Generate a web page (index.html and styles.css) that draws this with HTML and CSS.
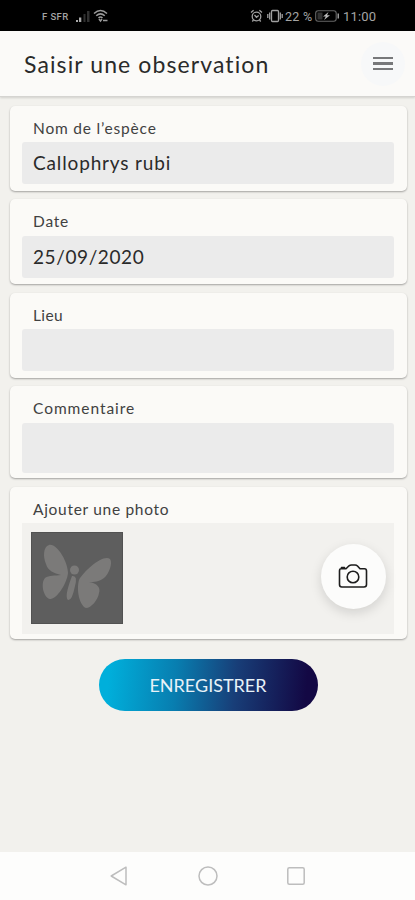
FILE: index.html
```html
<!DOCTYPE html>
<html lang="fr">
<head>
<meta charset="utf-8">
<title>Saisir une observation</title>
<link rel="stylesheet" href="styles.css">
</head>
<body>
<div class="status">
  <span class="carrier">F SFR</span>
  <svg class="signal" width="15" height="13" viewBox="0 0 15 13"><path d="M0 12V10H2V12ZM3 12V7.500H5.300V12Z" fill="#aaa"/><path d="M7.500 12V4H9.500V12ZM11 12V1H13.500V12Z" fill="#303030"/></svg>
  <svg class="wifi" width="16" height="14" viewBox="0 0 16 14" fill="none" stroke="#9a9a9a" stroke-width="1.500"><path d="M1 4.500Q7.500-1.500 14 4.500M3.200 6.800Q7.500 3 11.800 6.800M5.500 9Q7.500 7 9.500 9"/><path d="M6 10L7.500 12L9 10M10 11.500H14.500" /></svg>
  <span class="space"></span>
  <svg class="alarm" width="13" height="14" viewBox="0 0 13 14" fill="none" stroke="#a0a0a0" stroke-width="1.300"><circle cx="6.500" cy="7.500" r="4.300"/><path d="M1 3.500L3.600 1.300M12 3.500L9.400 1.300M4.500 6L6.500 8.300L8.700 6.500M3.500 11L2.300 12.500M9.500 11L10.700 12.500"/></svg>
  <svg class="vibrate" width="16" height="14" viewBox="0 0 16 14" fill="none" stroke="#a0a0a0" stroke-width="1.300"><rect x="4.500" y="1.500" width="7" height="11" rx="1"/><path d="M2.700 3.500V10.500M.8 5V9M13.300 3.500V10.500M15.200 5V9"/></svg>
  <span class="percent">22 %</span>
  <svg class="battery" width="25" height="12" viewBox="0 0 25 12"><rect x=".7" y=".7" width="20.500" height="10.600" rx="2.500" fill="none" stroke="#666" stroke-width="1.100"/><path d="M22.500 3.500H24V8.500H22.500Z" fill="#999"/><rect x="2.500" y="2.500" width="5" height="7" fill="#333"/><path d="M13.500 2L8 6.500H10.800L9 10L15 5.300H12Z" fill="#bbb"/></svg>
  <span class="clock">11:00</span>
</div>
<header class="header">
  <h1 class="title">Saisir une observation</h1>
  <button class="menu" aria-label="Menu"><i></i><i></i><i></i></button>
</header>
<main class="form">
  <section class="card"><div class="label l-name">Nom de l’espèce</div><div class="field v-name">Callophrys rubi</div></section>
  <section class="card"><div class="label l-date">Date</div><div class="field v-date">25/09/2020</div></section>
  <section class="card"><div class="label l-place">Lieu</div><div class="field"></div></section>
  <section class="card comment"><div class="label l-comment">Commentaire</div><div class="field"></div></section>
  <section class="card photo"><div class="label l-photo">Ajouter une photo</div>
    <div class="picker">
      <svg class="thumb" width="92" height="92" viewBox="0 0 92 92"><rect width="92" height="92" fill="#5e5e5e"/><rect x=".5" y=".5" width="91" height="91" fill="none" stroke="#525252"/><g fill="#7b7a79"><path d="M18 13C26 11 37 30 37 41C36 52 25 68 19 67C13 66 9 52 14 46C18 43 24 44 30 43C23 41 17 39 15 32C12 25 12 15 18 13Z"/><path d="M79 27C82 31 78 42 73 46C68 50 63 50 58 50C66 51 70 56 68 61C67 68 60 76 55 76C49 74 45 59 48 48C53 39 72 22 79 27Z"/><circle cx="43.500" cy="38" r="4.500"/><path d="M41 44Q47 43 44 54Q41 69 37 68Q33 65 41 44Z"/></g></svg>
      <button class="camera" aria-label="Photo"><svg width="30" height="25" viewBox="0 0 30 25" fill="none" stroke="#1d1d1d" stroke-width="1.600" stroke-linejoin="round" stroke-linecap="round"><path d="M3 4.800H8L11 1.800Q12 1 13.500 1H17Q18.500 1 19.500 2L22 4.800H26.500Q28.500 4.800 28.500 7V20.500Q28.500 23 26 23H3.800Q1.500 23 1.500 20.500V7Q1.500 4.800 3 4.800ZM3.500 4.500V3.500H6.500V4.500"/><circle cx="15" cy="13" r="5.800"/></svg></button>
    </div>
  </section>
  <button class="save"><span>ENREGISTRER</span></button>
</main>
<nav class="nav">
  <svg width="18" height="20" viewBox="0 0 18 20"><path d="M16 1.200V18.800L1.200 10Z"/></svg>
  <svg width="20" height="20" viewBox="0 0 20 20"><circle cx="10" cy="10" r="9"/></svg>
  <svg width="18" height="18" viewBox="0 0 18 18"><rect x=".8" y=".8" width="16.400" height="16.400" rx="1.500"/></svg>
</nav>
</body>
</html>
```
FILE: styles.css
```css
* { box-sizing: border-box; }
body { margin: 0; width: 415px; height: 900px; overflow: hidden; display: flex; flex-direction: column; background: #f2f1ed; font-family: Lato, sans-serif; color: #2a2a2a; }
button { border: 0; padding: 0; font: inherit; }
svg { flex: none; display: block; }
.status { height: 31px; flex: none; background: #000; display: flex; align-items: center; padding: 1px 38px 0 42px; color: #a5a5a5; font: 12px Roboto, sans-serif; white-space: nowrap; }
.carrier { width: 34px; font-size: 9.5px; font-weight: 500; letter-spacing: .4px; }
.wifi { margin-left: 2px; }
.space { flex: 1; }
.vibrate { margin: 0 2px 0 4px; }
.percent { width: 29px; font-size: 12.5px; letter-spacing: .3px; }
.battery { margin: 0 3px 0 1px; }
.clock { width: 34px; font-size: 13px; letter-spacing: .2px; }
.header { height: 66px; flex: none; background: #fbfaf8; display: flex; align-items: center; justify-content: space-between; padding: 0 10px 0 24px; border-bottom: 1px solid #d5d4d1; box-shadow: 0 1px 2px #0002; }
.title { margin: 0; font-size: 23px; font-weight: 400; letter-spacing: 1.1px; white-space: nowrap; }
.menu { width: 44px; height: 44px; border-radius: 50%; background: #f7f8f9; display: flex; flex-direction: column; align-items: center; justify-content: center; gap: 3px; }
.menu i { width: 20px; height: 2.400px; background: #77787a; }
.form { flex: 1; padding: 8.500px 8.500px 0 9.500px; display: flex; flex-direction: column; gap: 8.500px; }
.card { height: 85px; flex: none; padding: 0 12.500px 0 12px; border-radius: 5px; background: #fbfaf7; box-shadow: 0 1px 2px #0005; }
.label { height: 36.500px; padding-left: 11.500px; line-height: 45px; font-size: 15.500px; letter-spacing: .8px; color: #414141; white-space: nowrap; }
.field { height: 42px; border-radius: 3px; background: #ebebeb; padding-left: 11.500px; font-size: 19px; line-height: 42px; letter-spacing: .85px; white-space: nowrap; }
.l-photo { letter-spacing: .7px; }
.l-comment { letter-spacing: .95px; }
.l-place { letter-spacing: .4px; }
.v-date { letter-spacing: .6px; }
.comment { height: 92px; }
.comment .field { height: 50px; }
.photo { height: 152px; }
.picker { height: 111px; background: #f2f1ee; padding: 9px 8.500px 0 9px; display: flex; justify-content: space-between; }
.camera { width: 65px; height: 65px; margin-top: 12px; border-radius: 50%; background: #fcfcfb; box-shadow: 0 4px 12px #0002; display: grid; place-items: center; }
.save { width: 219px; height: 52px; margin: 12px 0 0 89px; flex: none; border-radius: 26px; background: linear-gradient(95deg, #00afdb 5%, #087eb0 35%, #183e78 62%, #130844 94%); color: #e8f2f8; font-size: 18px; white-space: nowrap; }
.nav { height: 48px; flex: none; background: #fdfdfc; display: flex; align-items: center; justify-content: space-between; padding: 0 110px; fill: none; stroke: #bdbdbd; stroke-width: 1.500; stroke-linejoin: round; }
```
